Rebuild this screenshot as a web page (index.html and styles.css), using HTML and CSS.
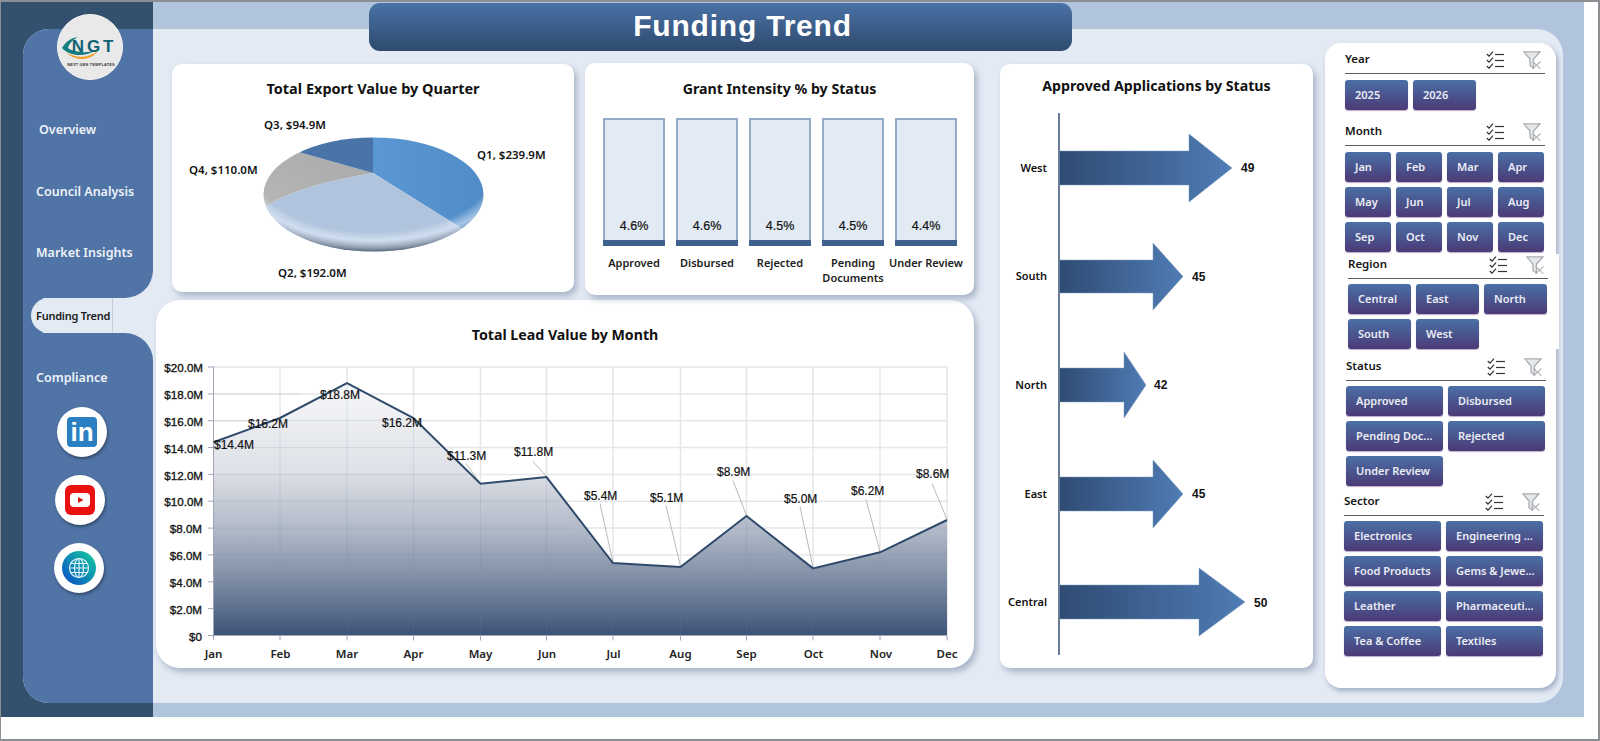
FILE: index.html
```html
<!DOCTYPE html>
<html lang="en">
<head>
<meta charset="utf-8">
<title>Funding Trend</title>
<link rel="stylesheet" href="styles.css">
</head>
<body>
<svg class="defs" width="0" height="0" aria-hidden="true">
  <defs>
    <symbol id="ic-check" viewBox="0 0 18 18">
      <g fill="none" stroke="#333" stroke-width="1.2">
        <path d="M0.8 3 L3 5.2 L7 0.6"/><path d="M0.8 9 L3 11.2 L7 6.6"/><path d="M0.8 15 L3 17.2 L7 12.6"/>
        <path d="M9 3.5 H18"/><path d="M9 9.5 H18"/><path d="M9 15.5 H18"/>
      </g>
    </symbol>
    <symbol id="ic-funnel" viewBox="0 0 18 18">
      <path d="M0.8 0.8 H17 L10.5 8 V17 L7 14.5 V8 Z" fill="#e6e7e9" stroke="#a9adb1" stroke-width="1.3"/>
      <path d="M9.5 10.5 L17.5 17.8 M17.5 10.5 L9.5 17.8" fill="none" stroke="#b0b3b6" stroke-width="1.1"/>
    </symbol>
    <linearGradient id="arrowFill" x1="0" x2="1" y1="0" y2="0">
      <stop offset="0" stop-color="#2f4b72"/><stop offset="1" stop-color="#4f7cb5"/>
    </linearGradient>
    <linearGradient id="areaFill" gradientUnits="userSpaceOnUse" x1="0" x2="0" y1="384" y2="636">
      <stop offset="0" stop-color="#f7f8fa"/><stop offset=".35" stop-color="#dde0e6"/><stop offset=".59" stop-color="#aeb7c6"/><stop offset=".79" stop-color="#7b8aa2"/><stop offset="1" stop-color="#3c5377"/>
    </linearGradient>
    <linearGradient id="q1Fill" x1="0" x2="1" y1="0" y2="0">
      <stop offset="0" stop-color="#5a97d3"/><stop offset="1" stop-color="#4c87c2"/>
    </linearGradient>
    <linearGradient id="q4Fill" x1="0" x2="1" y1="1" y2="0">
      <stop offset="0" stop-color="#bcbcbc"/><stop offset="1" stop-color="#a7a7a7"/>
    </linearGradient>
    <radialGradient id="pieBevel" cx=".5" cy=".3" r=".72">
      <stop offset=".74" stop-color="#fff" stop-opacity="0"/>
      <stop offset=".84" stop-color="#e8f2ff" stop-opacity=".55"/>
      <stop offset=".92" stop-color="#8c96a4" stop-opacity=".65"/>
      <stop offset="1" stop-color="#28374c" stop-opacity=".95"/>
    </radialGradient>
    <clipPath id="pieClip"><ellipse cx="373.5" cy="194.5" rx="110" ry="57"/></clipPath>
    <linearGradient id="globeFill" x1="0" x2="1" y1="1" y2="0">
      <stop offset="0" stop-color="#0a49c8"/><stop offset="1" stop-color="#12d0a0"/>
    </linearGradient>
  </defs>
</svg>

<div class="screen">
  <div class="frame">
    <div class="panel">
      <aside class="side">
        <div class="logo">
          <svg class="logo-art" viewBox="0 0 64 64" width="64" height="64">
            <path d="M4 33 C9 25 14 23 20 22 C14 25 11 29 10 33 C16 37 28 39 38 35 C28 42 12 42 4 33 Z" fill="#127c80"/>
            <path d="M8 37 C18 44 30 43 40 36 C32 47 16 46 8 37 Z" fill="#f0a22e"/>
            <text class="logo-ngt" x="36" y="37" text-anchor="middle">NGT</text>
            <text class="logo-sub" x="33" y="51" text-anchor="middle">NEXT GEN TEMPLATES</text>
          </svg>
        </div>
        <div class="side-top">
          <a class="nav nav-first">Overview</a>
          <a class="nav">Council Analysis</a>
          <a class="nav">Market Insights</a>
        </div>
        <div class="side-active">
          <div class="pill"><span class="pill-label">Funding Trend</span></div>
        </div>
        <div class="side-bottom">
          <a class="nav">Compliance</a>
          <div class="socials">
            <div class="social social-in">
              <svg viewBox="0 0 30 30" width="30" height="30"><rect width="30" height="30" rx="4" fill="#2b7fc3"/><text class="in-text" x="15" y="24" text-anchor="middle">in</text></svg>
            </div>
            <div class="social social-yt">
              <svg viewBox="0 0 30 30" width="30" height="30"><rect width="30" height="30" rx="6" fill="#e8120f"/><rect x="5" y="8" width="20" height="14" rx="4" fill="#fff"/><path d="M13 12 L18.5 15 L13 18 Z" fill="#d8120f"/></svg>
            </div>
            <div class="social social-web">
              <svg viewBox="0 0 34 34" width="34" height="34"><circle cx="17" cy="17" r="17" fill="url(#globeFill)"/><g fill="none" stroke="#dff4fb" stroke-width="1.2"><circle cx="17" cy="17" r="9.5"/><ellipse cx="17" cy="17" rx="4.5" ry="9.5"/><path d="M17 7.5 V26.5 M7.5 17 H26.5 M8.8 12.5 H25.2 M8.8 21.5 H25.2"/></g></svg>
            </div>
          </div>
        </div>
      </aside>

      <main class="content">
        <h1 class="page-title">Funding Trend</h1>

        <div class="left">
          <div class="toprow">
            <section class="card card-pie">
              <h2 class="card-title">Total Export Value by Quarter</h2>
              <svg class="chart chart-pie" viewBox="172 98 402 194">
                <g clip-path="url(#pieClip)">
                  <path d="M373 173 L373 120 L530 120 L530 271 Z" fill="url(#q1Fill)"/>
                  <path d="M373 173 L530 271 L530 270 L210 270 L210 225 L268 205 Q300 185 373 173 Z" fill="#b0c4de"/>
                  <path d="M373 173 Q300 185 268 205 L210 225 L210 133 L231 133 Z" fill="url(#q4Fill)"/>
                  <path d="M373 173 L231 133 L231 120 L373 120 Z" fill="#4a74a8"/>
                </g>
                <ellipse cx="373.5" cy="194.5" rx="110" ry="57" fill="url(#pieBevel)"/>
                <text class="pie-label" x="264" y="129">Q3, $94.9M</text>
                <text class="pie-label" x="189" y="174">Q4, $110.0M</text>
                <text class="pie-label" x="477" y="159">Q1, $239.9M</text>
                <text class="pie-label" x="278" y="277">Q2, $192.0M</text>
              </svg>
            </section>

            <section class="card card-grant">
              <h2 class="card-title title-sm">Grant Intensity % by Status</h2>
              <div class="bars">
                <div class="bar-col"><div class="bar-box"><span class="bar-value">4.6%</span><span class="bar-fill"></span></div><span class="bar-label">Approved</span></div>
                <div class="bar-col"><div class="bar-box"><span class="bar-value">4.6%</span><span class="bar-fill"></span></div><span class="bar-label">Disbursed</span></div>
                <div class="bar-col"><div class="bar-box"><span class="bar-value">4.5%</span><span class="bar-fill"></span></div><span class="bar-label">Rejected</span></div>
                <div class="bar-col"><div class="bar-box"><span class="bar-value">4.5%</span><span class="bar-fill"></span></div><span class="bar-label">Pending Documents</span></div>
                <div class="bar-col"><div class="bar-box"><span class="bar-value">4.4%</span><span class="bar-fill"></span></div><span class="bar-label">Under Review</span></div>
              </div>
            </section>
          </div>

          <section class="card card-lead">
            <h2 class="card-title title-sm">Total Lead Value by Month</h2>
            <svg class="chart chart-lead" viewBox="156 346 818 322">
              <g class="grid">
                <path d="M214 367.5 H947 M214 394.4 H947 M214 421.2 H947 M214 448 H947 M214 474.9 H947 M214 501.7 H947 M214 528.6 H947 M214 555.4 H947 M214 582.3 H947 M214 609.1 H947"/>
                <path d="M280 367.5 V636 M347 367.5 V636 M413.5 367.5 V636 M480.5 367.5 V636 M546.5 367.5 V636 M613 367.5 V636 M680.5 367.5 V636 M746.5 367.5 V636 M813 367.5 V636 M880 367.5 V636 M947 367.5 V636"/>
              </g>
              <path d="M213.5 636 V442.7 L280 418.5 L347 383.6 L413.5 418.5 L480.5 484.3 L546.5 477.6 L613 563.5 L680.5 567.5 L746.5 516.5 L813 568.9 L880 552.8 L947 520.5 V636 Z" fill="url(#areaFill)"/>
              <g class="grid-over">
                <path d="M280 418.5 V636 M347 383.6 V636 M413.5 418.5 V636 M480.5 484.3 V636 M546.5 477.6 V636 M613 563.5 V636 M680.5 567.5 V636 M746.5 516.5 V636 M813 568.9 V636 M880 552.8 V636"/>
                <path d="M214 394.4 H300 M214 421.2 H395 M214 448 H440 M214 474.9 H472 M214 501.7 H559 M214 528.6 H574 M214 555.4 H606 M214 582.3 H947 M214 609.1 H947 M730 528.6 H760 M725 555.4 H775 M890 555.4 H947 M947 528.6 H935"/>
              </g>
              <g class="axis">
                <path d="M213.5 367.5 V640"/>
                <path d="M208 636 H947"/>
                <path d="M208 367.5 H214 M208 394.4 H214 M208 421.2 H214 M208 448 H214 M208 474.9 H214 M208 501.7 H214 M208 528.6 H214 M208 555.4 H214 M208 582.3 H214 M208 609.1 H214"/>
                <path d="M280 636 V641 M347 636 V641 M413.5 636 V641 M480.5 636 V641 M546.5 636 V641 M613 636 V641 M680.5 636 V641 M746.5 636 V641 M813 636 V641 M880 636 V641 M947 636 V641"/>
              </g>
              <path class="leaders" d="M466 464 L480.5 484 M533 462 L546.5 477 M600 504 L613 563 M666 506 L680.5 567 M733 481 L746.5 516 M800 507 L813 568 M866 500 L880 552 M932 484 L947 520"/>
              <path class="line" d="M213.5 442.7 L280 418.5 L347 383.6 L413.5 418.5 L480.5 484.3 L546.5 477.6 L613 563.5 L680.5 567.5 L746.5 516.5 L813 568.9 L880 552.8 L947 520.5"/>
              <g class="y-labels">
                <text x="203" y="372">$20.0M</text><text x="203" y="399">$18.0M</text><text x="203" y="426">$16.0M</text><text x="203" y="453">$14.0M</text><text x="203" y="480">$12.0M</text><text x="203" y="506">$10.0M</text>
                <text x="202" y="533">$8.0M</text><text x="202" y="560">$6.0M</text><text x="202" y="587">$4.0M</text><text x="202" y="614">$2.0M</text><text x="202" y="641">$0</text>
              </g>
              <g class="x-labels">
                <text x="213.5" y="658">Jan</text><text x="280.5" y="658">Feb</text><text x="347" y="658">Mar</text><text x="413.5" y="658">Apr</text><text x="480.5" y="658">May</text><text x="547" y="658">Jun</text>
                <text x="613.5" y="658">Jul</text><text x="680.5" y="658">Aug</text><text x="746.5" y="658">Sep</text><text x="813.5" y="658">Oct</text><text x="881" y="658">Nov</text><text x="947" y="658">Dec</text>
              </g>
              <g class="d-labels">
                <text x="214" y="449">$14.4M</text><text x="248" y="428">$16.2M</text><text x="320" y="399">$18.8M</text><text x="382" y="427">$16.2M</text><text x="447" y="460">$11.3M</text><text x="514" y="456">$11.8M</text>
                <text x="584" y="500">$5.4M</text><text x="650" y="502">$5.1M</text><text x="717" y="476">$8.9M</text><text x="784" y="503">$5.0M</text><text x="851" y="495">$6.2M</text><text x="916" y="478">$8.6M</text>
              </g>
            </svg>
          </section>
        </div>

        <section class="card card-approved">
          <h2 class="card-title title-sm">Approved Applications by Status</h2>
          <svg class="chart chart-approved" viewBox="1000 96 313 572">
            <path d="M1059 113 V655" stroke="#34506f" stroke-width="1.5" fill="none"/>
            <path class="arrow" d="M1059.5 151 H1189 V134 L1232 168 L1189 202 V185 H1059.5 Z"/>
            <path class="arrow" d="M1059.5 260 H1153 V243 L1183 276.5 L1153 310 V293 H1059.5 Z"/>
            <path class="arrow" d="M1059.5 368 H1124 V352 L1146 385 L1124 418 V402 H1059.5 Z"/>
            <path class="arrow" d="M1059.5 477 H1153 V460 L1183 494 L1153 528 V511 H1059.5 Z"/>
            <path class="arrow" d="M1059.5 585 H1199 V568 L1245 602 L1199 636 V619 H1059.5 Z"/>
            <g class="a-labels">
              <text x="1047" y="172">West</text><text x="1047" y="280">South</text><text x="1047" y="389">North</text><text x="1047" y="498">East</text><text x="1047" y="606">Central</text>
            </g>
            <g class="a-values">
              <text x="1241" y="172">49</text><text x="1192" y="281">45</text><text x="1154" y="389">42</text><text x="1192" y="498">45</text><text x="1254" y="607">50</text>
            </g>
          </svg>
        </section>

        <aside class="filters">
          <div class="slicer slicer-year">
            <div class="slicer-head"><span class="slicer-title">Year</span><svg class="sl-ic"><use href="#ic-check"/></svg><svg class="sl-ic"><use href="#ic-funnel"/></svg></div>
            <div class="btns cols-3"><span class="btn">2025</span><span class="btn">2026</span></div>
          </div>
          <div class="slicer slicer-month">
            <div class="slicer-head"><span class="slicer-title">Month</span><svg class="sl-ic"><use href="#ic-check"/></svg><svg class="sl-ic"><use href="#ic-funnel"/></svg></div>
            <div class="btns cols-4">
              <span class="btn">Jan</span><span class="btn">Feb</span><span class="btn">Mar</span><span class="btn">Apr</span>
              <span class="btn">May</span><span class="btn">Jun</span><span class="btn">Jul</span><span class="btn">Aug</span>
              <span class="btn">Sep</span><span class="btn">Oct</span><span class="btn">Nov</span><span class="btn">Dec</span>
            </div>
          </div>
          <div class="slicer slicer-region">
            <div class="slicer-head"><span class="slicer-title">Region</span><svg class="sl-ic"><use href="#ic-check"/></svg><svg class="sl-ic"><use href="#ic-funnel"/></svg></div>
            <div class="btns cols-3">
              <span class="btn">Central</span><span class="btn">East</span><span class="btn">North</span>
              <span class="btn">South</span><span class="btn">West</span>
            </div>
          </div>
          <div class="slicer slicer-status">
            <div class="slicer-head"><span class="slicer-title">Status</span><svg class="sl-ic"><use href="#ic-check"/></svg><svg class="sl-ic"><use href="#ic-funnel"/></svg></div>
            <div class="btns cols-2">
              <span class="btn">Approved</span><span class="btn">Disbursed</span>
              <span class="btn">Pending Doc...</span><span class="btn">Rejected</span>
              <span class="btn">Under Review</span>
            </div>
          </div>
          <div class="slicer slicer-sector">
            <div class="slicer-head"><span class="slicer-title">Sector</span><svg class="sl-ic"><use href="#ic-check"/></svg><svg class="sl-ic"><use href="#ic-funnel"/></svg></div>
            <div class="btns cols-2">
              <span class="btn">Electronics</span><span class="btn">Engineering ...</span>
              <span class="btn">Food Products</span><span class="btn">Gems &amp; Jewe...</span>
              <span class="btn">Leather</span><span class="btn">Pharmaceuti...</span>
              <span class="btn">Tea &amp; Coffee</span><span class="btn">Textiles</span>
            </div>
          </div>
        </aside>
      </main>
    </div>
  </div>
</div>
</body>
</html>
```

FILE: styles.css
```css
* { box-sizing: border-box; }
html, body { margin: 0; padding: 0; background: #fff; }
body { font-family: "Noto Sans", "Liberation Sans", sans-serif; color: #111; overflow: hidden; }
.defs { position: absolute; }

.screen {
  width: 1600px;
  height: 741px;
  background: #fff;
  border: solid #8b8f94;
  border-width: 2px 2px 2px 1px;
}
.frame {
  width: 1583px;
  height: 715px;
  padding: 27px 0 0 22px;
  background: linear-gradient(to right, #34506f 152px, #b0c4dc 152px);
}
.panel {
  position: relative;
  width: 1540px;
  height: 674px;
  display: flex;
  background: #e3eaf4;
  border-radius: 26px;
}

/* sidebar */
.side { position: relative; width: 130px; flex: none; display: flex; flex-direction: column; }
.side-top {
  height: 269px;
  padding: 70px 0 0 13px;
  background: #5074a6;
  border-radius: 26px 0 28px 0;
}
.side-active { height: 35px; background: linear-gradient(to right, #5074a6 20px, transparent 20px); padding-left: 8px; }
.pill {
  height: 35px;
  background: #e3eaf4;
  border-radius: 18px 0 0 18px;
  display: flex;
  align-items: center;
}
.pill-label {
  width: 82px;
  height: 35px;
  line-height: 35px;
  padding-left: 5px;
  border-right: 1px solid #c3cfdf;
  font-size: 11px;
  font-weight: 600;
  letter-spacing: -.25px;
  color: #1b1b1b;
  white-space: nowrap;
}
.side-bottom {
  flex: 1;
  padding: 14px 0 0 13px;
  background: #5074a6;
  border-radius: 0 28px 0 26px;
}
.nav {
  display: block;
  height: 61.5px;
  line-height: 61.5px;
  font-size: 12.5px;
  font-weight: 600;
  color: #eef2f8;
  white-space: nowrap;
}
.nav-first { margin-left: 3px; }

.logo {
  position: absolute;
  left: 34px;
  top: -15px;
  width: 66px;
  height: 66px;
  border-radius: 50%;
  background: #e9e9e9;
  border: 1px solid #f6f6f6;
  overflow: hidden;
}
.logo-art { display: block; }
.logo-ngt { font: 700 17px "Liberation Sans", sans-serif; fill: #0f6272; letter-spacing: 2.8px; }
.logo-sub { font: 700 3.8px "Liberation Sans", sans-serif; fill: #333; letter-spacing: .25px; }

.socials { display: flex; flex-direction: column; gap: 18px; margin-top: -1.5px; margin-left: -13px; }
.social {
  width: 50px;
  height: 50px;
  border-radius: 50%;
  background: #fff;
  box-shadow: 1px 2px 3px rgba(30, 40, 60, .55);
  display: flex;
  align-items: center;
  justify-content: center;
}
.social-in { margin-left: 34px; }
.social-yt { margin-left: 32px; }
.social-web { margin-left: 31px; }
.in-text { font: 700 26px "Liberation Sans", sans-serif; fill: #fff; }

/* main */
.content { position: relative; flex: 1; display: flex; align-items: flex-start; padding-left: 3px; }
.page-title {
  position: absolute;
  left: 216px;
  top: -26px;
  width: 703px;
  height: 48px;
  margin: 0;
  border-radius: 11px;
  background: linear-gradient(#4a72a6, #2e4a6e);
  color: #fff;
  font: 700 30px/46px "Liberation Sans", sans-serif;
  letter-spacing: .8px;
  text-align: center;
  padding-left: 44px;
}
.left { width: 818px; flex: none; margin-top: 34px; }
.toprow { display: flex; align-items: flex-start; height: 237px; }
.card {
  background: #fff;
  border-radius: 10px;
  box-shadow: 3px 4px 6px rgba(95, 115, 145, .45);
}
.card-title {
  margin: 0;
  font-size: 14.5px;
  line-height: 20px;
  font-weight: 700;
  text-align: center;
  color: #111;
  white-space: nowrap;
}
.title-sm { font-size: 14.2px; }
.chart { display: block; }
.card-pie { width: 402px; height: 228px; margin: 1px 0 0 16px; padding-top: 14px; }
.chart-pie { width: 402px; height: 194px; }
.card-grant { width: 401px; height: 232px; margin-left: 11px; padding-top: 16px; }
.card-lead { width: 818px; height: 368px; border-radius: 24px; padding-top: 25px; }
.chart-lead { width: 818px; height: 323px; }
.card-approved { width: 313px; height: 604px; flex: none; margin: 35px 0 0 26px; padding-top: 12px; }
.chart-approved { width: 313px; height: 572px; }

.pie-label { font: 600 11.5px "Noto Sans", sans-serif; fill: #111; }

/* bars */
.bars { display: flex; gap: 11px; margin: 19px 0 0 18px; }
.bar-col { width: 62px; display: flex; flex-direction: column; align-items: center; }
.bar-box {
  width: 100%;
  height: 128px;
  background: #e2eaf4;
  border: 2px solid #94aac6;
  border-bottom: 0;
  display: flex;
  flex-direction: column;
  justify-content: flex-end;
  align-items: center;
}
.bar-value { font: 400 12.5px/16px "Liberation Sans", sans-serif; -webkit-text-stroke: .2px #111; margin-bottom: 6px; }
.bar-fill { width: calc(100% + 4px); height: 6px; flex: none; background: #3f6190; margin: 0 -2px; }
.bar-label {
  width: 82px;
  margin: 9px -10px 0;
  font-size: 11px;
  line-height: 15px;
  font-weight: 600;
  text-align: center;
  color: #222;
}

/* line chart */
.grid path { fill: none; stroke: #e6e6ea; stroke-width: 1.5; }
.grid-over path { fill: none; stroke: rgba(120, 125, 150, .16); stroke-width: 1; }
.axis path { fill: none; stroke: #a4a4ba; stroke-width: 1; }
.leaders { fill: none; stroke: #a8a8a8; stroke-width: .8; }
.line { fill: none; stroke: #2f4a6b; stroke-width: 2; stroke-linejoin: miter; }
.y-labels text { font: 400 11.6px "Liberation Sans", sans-serif; fill: #151515; stroke: #151515; stroke-width: .35px; text-anchor: end; }
.x-labels text { font: 600 11.5px "Noto Sans", sans-serif; fill: #222; text-anchor: middle; }
.d-labels text { font: 400 12px "Liberation Sans", sans-serif; fill: #111; stroke: #111; stroke-width: .2px; }

/* arrows */
.arrow { fill: url(#arrowFill); stroke: #7f9cc2; stroke-width: .5; }
.a-labels text { font: 600 11px "Noto Sans", sans-serif; fill: #111; text-anchor: end; }
.a-values text { font: 700 12px "Liberation Sans", sans-serif; fill: #111; }

/* filter panel */
.filters {
  width: 231px;
  height: 645px;
  flex: none;
  margin: 14px 0 0 12px;
  padding: 7px 0 0 20px;
  background: #fff;
  border-radius: 16px;
  box-shadow: 2px 3px 5px rgba(95, 115, 145, .5);
}
.slicer { width: 200px; background: #fff; }
.slicer-head {
  height: 24px;
  display: flex;
  align-items: center;
  gap: 19px;
  padding-right: 4px;
  border-bottom: 1.5px solid #555c66;
  padding-bottom: 3px;
}
.slicer-title { flex: 1; margin-top: -3px; font-size: 11.5px; font-weight: 600; color: #151515; }
.sl-ic { width: 18px; height: 18px; flex: none; }
.btns { display: grid; margin-top: 6px; gap: 5px; }
.cols-4 { grid-template-columns: repeat(4, 46px); }
.cols-3 { grid-template-columns: repeat(3, 63px); }
.cols-2 { grid-template-columns: repeat(2, 97px); }
.btn {
  height: 30px;
  line-height: 29px;
  padding-left: 10px;
  border-radius: 3px;
  background: linear-gradient(#4a70a6, #4b3a76);
  box-shadow: 0 1px 1px rgba(120, 90, 150, .5);
  color: #ebedf4;
  font-size: 11px;
  font-weight: 600;
  white-space: nowrap;
  overflow: hidden;
}
.slicer-month { margin-top: 11.5px; }
.slicer-region { width: 211px; margin: 2.5px 0 0 3px; padding: 1px 11px 0 0; }
.slicer-status { margin: 8px 0 0 1px; }
.slicer-sector { margin: 6px 0 0 -1px; }
.slicer-region .btns, .slicer-status .btns, .slicer-sector .btns { margin-top: 5px; }
```
